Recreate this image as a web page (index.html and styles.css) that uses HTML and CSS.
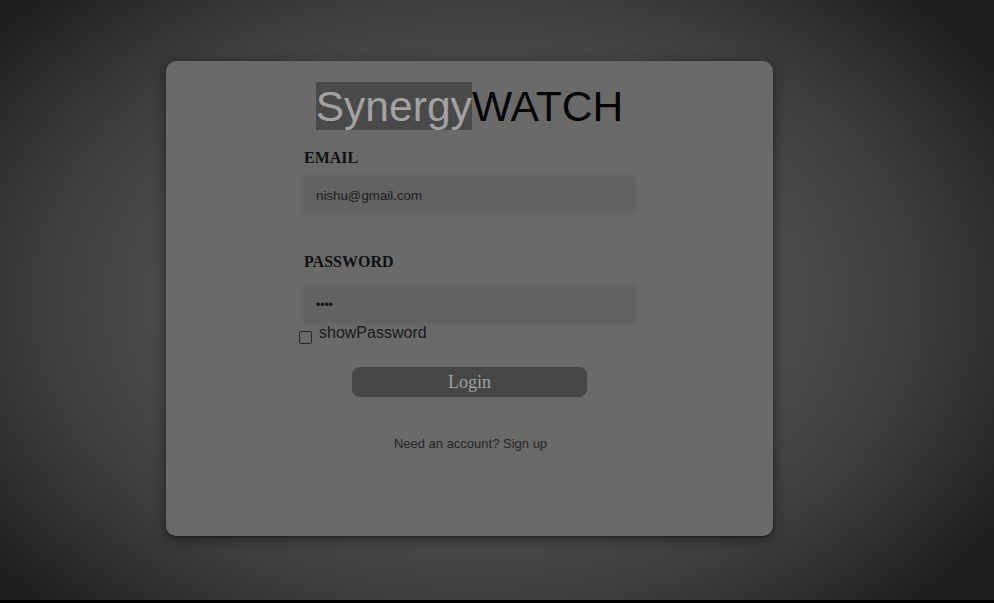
FILE: index.html
```html
<!DOCTYPE html>
<html>
<head>
<meta charset="utf-8">
<link rel="stylesheet" href="styles.css">
</head>
<body>
<div class="page">
  <div class="card">
    <h1 class="brand"><span class="hl">Synergy</span>WATCH</h1>
    <form class="form">
      <label class="label label-email">EMAIL</label>
      <input class="field" type="text" value="nishu@gmail.com">
      <label class="label label-pass">PASSWORD</label>
      <input class="field field-pass" type="password" value="abcd">
      <div class="show-row">
        <input class="check" type="checkbox">
        <span class="show-text">showPassword</span>
      </div>
      <div class="btn-row"><button type="button" class="login">Login</button></div>
      <p class="signup">Need an account? Sign up</p>
    </form>
  </div>
</div>
</body>
</html>
```

FILE: styles.css
```css
html, body {
  margin: 0;
  padding: 0;
  background: #000;
}
.page {
  height: 603px;
  box-sizing: border-box;
  padding: 61px 0 0 166px;
  background: radial-gradient(ellipse 62% 72% at 48% 50%, #5e5e5e 0%, #565656 35%, #3e3e3e 70%, #1f1f1f 100%);
  border-bottom: 3px solid #000;
  overflow: hidden;
}
.card {
  width: 607px;
  height: 475px;
  box-sizing: border-box;
  background: #6a6a6a;
  border-radius: 10px;
  box-shadow: 0 3px 14px rgba(0,0,0,0.45), 0 1px 2px rgba(0,0,0,0.3);
  display: flex;
  flex-direction: column;
  align-items: center;
  padding-top: 22px;
}
.brand {
  margin: 0;
  font-family: "Liberation Sans", Arial, sans-serif;
  font-weight: normal;
  font-size: 42.6px;
  line-height: 46px;
  color: #050505;
  letter-spacing: 0;
}
.hl {
  background: #4a4a4a;
  color: #a2a2a2;
}
.form {
  width: 331px;
  display: flex;
  flex-direction: column;
  margin: 0;
}
.label {
  display: block;
  font-family: "Liberation Serif", "Times New Roman", serif;
  font-weight: bold;
  font-size: 16px;
  line-height: 18px;
  color: #111;
}
.label-email { margin-top: 20px; }
.label-pass { margin-top: 40px; }
.field {
  display: block;
  width: 331px;
  height: 36px;
  box-sizing: border-box;
  border: none;
  outline: none;
  background: #636363;
  box-shadow: 0 0 5px 1px rgba(0,0,0,0.06);
  padding: 0 12px;
  font-family: "Liberation Sans", Arial, sans-serif;
  font-size: 13.333px;
  color: #1e1e1e;
  margin-top: 10px;
}
.field-pass {
  margin-top: 16px;
  font-size: 12px;
  letter-spacing: 0;
  color: #111;
}
.show-row {
  display: flex;
  align-items: flex-start;
  margin-left: -5px;
  margin-top: 1px;
}
.check {
  appearance: none;
  -webkit-appearance: none;
  width: 13px;
  height: 13px;
  margin: 7px 7px 0 0;
  border: 1px solid #2a2a2a;
  border-radius: 2px;
  background: #696969;
  box-sizing: border-box;
}
.show-text {
  font-family: "Liberation Sans", Arial, sans-serif;
  font-size: 16px;
  line-height: 18px;
  color: #1a1a1a;
}
.btn-row {
  display: flex;
  justify-content: center;
  margin-top: 23px;
}
.login {
  width: 235px;
  height: 30px;
  border: none;
  border-radius: 8px;
  background: #474747;
  color: #a0a0a0;
  font-family: "Liberation Serif", "Times New Roman", serif;
  font-size: 18px;
  padding: 0;
}
.signup {
  margin: 39px 0 0 2px;
  text-align: center;
  font-family: "Liberation Sans", Arial, sans-serif;
  font-size: 13px;
  line-height: 15px;
  color: #262626;
}
```
